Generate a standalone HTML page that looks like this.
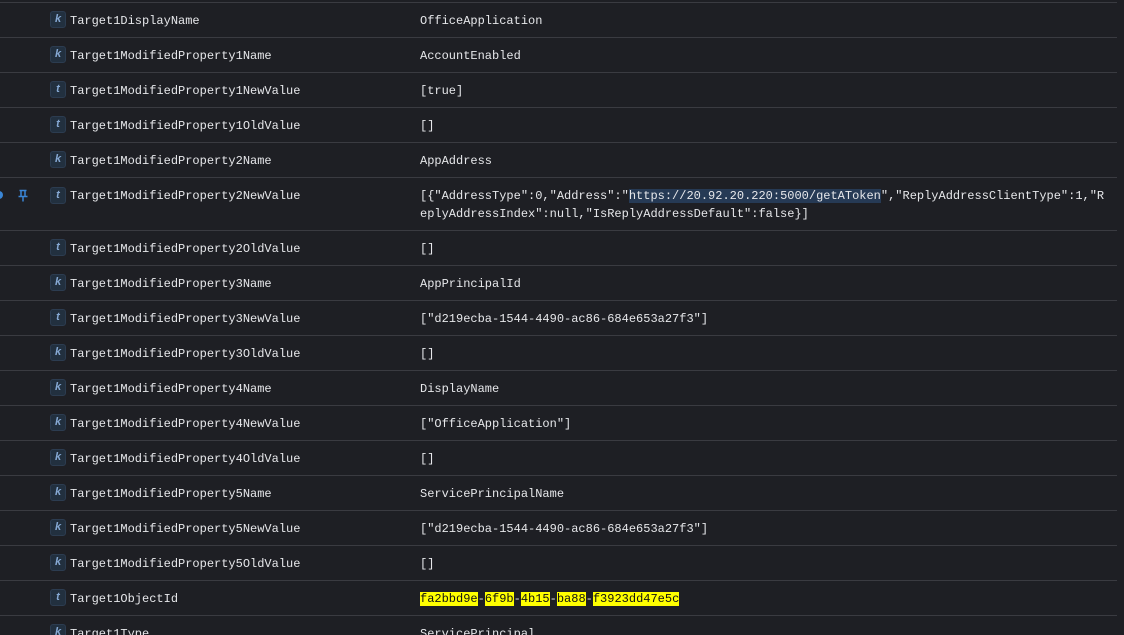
<!DOCTYPE html>
<html><head><meta charset="utf-8"><style>
*{margin:0;padding:0;box-sizing:border-box}
html,body{width:1124px;height:635px;overflow:hidden}
body{background:#1e1f24;position:relative;font-family:"Liberation Mono",monospace;font-size:12px;color:#e6e7ea}
.r{position:absolute;left:0;width:1117px;border-top:1px solid #3a3b41}
.b{position:absolute;left:50px;width:16px;height:17px;background:#22303f;border:1px solid #2c3c50;border-radius:3px;color:#86a9d4;font-style:italic;font-weight:bold;font-size:11px;text-align:center;line-height:15px;font-family:"Liberation Sans",sans-serif}
.k{position:absolute;left:70px;line-height:18px}
.v{position:absolute;left:420px;line-height:18px;white-space:pre}
.sel{background:#263a55}
.hl{background:#ffff00;color:#111}
</style></head><body>
<div class="r" style="top:2px;height:35px"><span class="b" style="top:8px">k</span><span class="k" style="top:9px">Target1DisplayName</span><span class="v" style="top:9px">OfficeApplication</span></div>
<div class="r" style="top:37px;height:35px"><span class="b" style="top:8px">k</span><span class="k" style="top:9px">Target1ModifiedProperty1Name</span><span class="v" style="top:9px">AccountEnabled</span></div>
<div class="r" style="top:72px;height:35px"><span class="b" style="top:8px">t</span><span class="k" style="top:9px">Target1ModifiedProperty1NewValue</span><span class="v" style="top:9px">[true]</span></div>
<div class="r" style="top:107px;height:35px"><span class="b" style="top:8px">t</span><span class="k" style="top:9px">Target1ModifiedProperty1OldValue</span><span class="v" style="top:9px">[]</span></div>
<div class="r" style="top:142px;height:35px"><span class="b" style="top:8px">k</span><span class="k" style="top:9px">Target1ModifiedProperty2Name</span><span class="v" style="top:9px">AppAddress</span></div>
<div class="r" style="top:177px;height:53px">
<svg style="position:absolute;left:-4px;top:12px" width="8" height="10"><circle cx="3" cy="5" r="4" fill="#3a86d6"/></svg>
<svg style="position:absolute;left:17px;top:11px" width="12" height="14" viewBox="0 0 12 14"><path d="M2.5 1.5h7M4 1.5v6M8 1.5v6M1.5 7.5h9M6 7.5v5" stroke="#3a86d6" stroke-width="1.5" fill="none"/></svg>
<span class="b" style="top:9px">t</span><span class="k" style="top:9px">Target1ModifiedProperty2NewValue</span><span class="v" style="top:9px">[{"AddressType":0,"Address":"<span class="sel">https://20.92.20.220:5000/getAToken</span>","ReplyAddressClientType":1,"R
eplyAddressIndex":null,"IsReplyAddressDefault":false}]</span></div>
<div class="r" style="top:230px;height:35px"><span class="b" style="top:8px">t</span><span class="k" style="top:9px">Target1ModifiedProperty2OldValue</span><span class="v" style="top:9px">[]</span></div>
<div class="r" style="top:265px;height:35px"><span class="b" style="top:8px">k</span><span class="k" style="top:9px">Target1ModifiedProperty3Name</span><span class="v" style="top:9px">AppPrincipalId</span></div>
<div class="r" style="top:300px;height:35px"><span class="b" style="top:8px">t</span><span class="k" style="top:9px">Target1ModifiedProperty3NewValue</span><span class="v" style="top:9px">["d219ecba-1544-4490-ac86-684e653a27f3"]</span></div>
<div class="r" style="top:335px;height:35px"><span class="b" style="top:8px">k</span><span class="k" style="top:9px">Target1ModifiedProperty3OldValue</span><span class="v" style="top:9px">[]</span></div>
<div class="r" style="top:370px;height:35px"><span class="b" style="top:8px">k</span><span class="k" style="top:9px">Target1ModifiedProperty4Name</span><span class="v" style="top:9px">DisplayName</span></div>
<div class="r" style="top:405px;height:35px"><span class="b" style="top:8px">k</span><span class="k" style="top:9px">Target1ModifiedProperty4NewValue</span><span class="v" style="top:9px">["OfficeApplication"]</span></div>
<div class="r" style="top:440px;height:35px"><span class="b" style="top:8px">k</span><span class="k" style="top:9px">Target1ModifiedProperty4OldValue</span><span class="v" style="top:9px">[]</span></div>
<div class="r" style="top:475px;height:35px"><span class="b" style="top:8px">k</span><span class="k" style="top:9px">Target1ModifiedProperty5Name</span><span class="v" style="top:9px">ServicePrincipalName</span></div>
<div class="r" style="top:510px;height:35px"><span class="b" style="top:8px">k</span><span class="k" style="top:9px">Target1ModifiedProperty5NewValue</span><span class="v" style="top:9px">["d219ecba-1544-4490-ac86-684e653a27f3"]</span></div>
<div class="r" style="top:545px;height:35px"><span class="b" style="top:8px">k</span><span class="k" style="top:9px">Target1ModifiedProperty5OldValue</span><span class="v" style="top:9px">[]</span></div>
<div class="r" style="top:580px;height:35px"><span class="b" style="top:8px">t</span><span class="k" style="top:9px">Target1ObjectId</span><span class="v" style="top:9px"><span class="hl">fa2bbd9e</span>-<span class="hl">6f9b</span>-<span class="hl">4b15</span>-<span class="hl">ba88</span>-<span class="hl">f3923dd47e5c</span></span></div>
<div class="r" style="top:615px;height:35px"><span class="b" style="top:8px">k</span><span class="k" style="top:9px">Target1Type</span><span class="v" style="top:9px">ServicePrincipal</span></div>
</body></html>
